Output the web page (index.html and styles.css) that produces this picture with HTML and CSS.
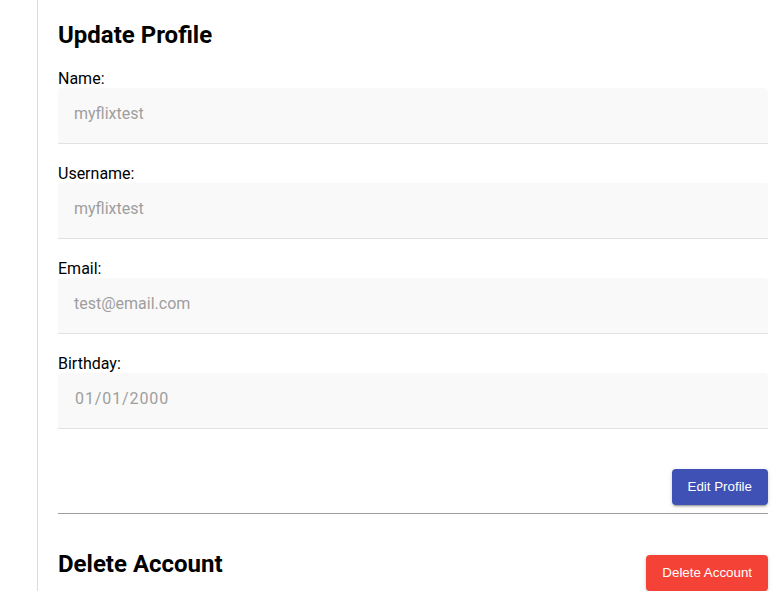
FILE: index.html
```html
<!DOCTYPE html>
<html lang="en">
<head>
<meta charset="utf-8">
<title>Profile</title>
<link rel="stylesheet" href="styles.css">
</head>
<body>
<div class="page">
  <main class="panel">
    <h2 class="title">Update Profile</h2>
    <form class="form">
      <div class="field">
        <label class="label">Name:</label>
        <div class="input">myflixtest</div>
      </div>
      <div class="field">
        <label class="label">Username:</label>
        <div class="input">myflixtest</div>
      </div>
      <div class="field">
        <label class="label">Email:</label>
        <div class="input">test@email.com</div>
      </div>
      <div class="field">
        <label class="label">Birthday:</label>
        <div class="input date">01/01/2000</div>
      </div>
      <div class="actions">
        <button type="button" class="btn btn-primary">Edit Profile</button>
      </div>
    </form>
    <hr class="divider">
    <div class="danger">
      <h2 class="title danger-title">Delete Account</h2>
      <button type="button" class="btn btn-danger">Delete Account</button>
    </div>
  </main>
</div>
</body>
</html>
```
FILE: styles.css
```css
html, body {
  margin: 0;
  padding: 0;
  background: #fff;
}
body {
  font-family: Roboto, "Liberation Sans", Arial, sans-serif;
  color: #000;
}
.page {
  padding-left: 37px;
  padding-right: 16px;
}
.panel {
  border-left: 1px solid #dcdcdc;
  padding-left: 20px;
  display: flex;
  flex-direction: column;
}
.title {
  margin: 21px 0 0;
  font-size: 24px;
  line-height: 28px;
  font-weight: 700;
}
.form {
  display: flex;
  flex-direction: column;
  gap: 20px;
  margin-top: 20px;
}
.field {
  display: flex;
  flex-direction: column;
}
.label {
  font-size: 16px;
  line-height: 19px;
}
.input {
  height: 51px;
  padding: 0 16px 4px;
  display: flex;
  align-items: center;
  background: #f9f9f9;
  border-bottom: 1px solid #e2e2e2;
  border-radius: 4px 4px 0 0;
  font-size: 16px;
  color: #9e9e9e;
}
.date {
  padding-left: 17px;
  letter-spacing: 0.9px;
}
.actions {
  display: flex;
  justify-content: flex-end;
  margin-top: 20px;
}
.btn {
  font-family: "Liberation Sans", Arial, sans-serif;
  font-size: 13.333px;
  line-height: 20px;
  height: 36px;
  padding: 0 16px;
  border: 0;
  border-radius: 4px;
  color: #fff;
  box-shadow: 0 3px 1px -2px rgba(0,0,0,0.2), 0 2px 2px 0 rgba(0,0,0,0.14), 0 1px 5px 0 rgba(0,0,0,0.12);
}
.btn-primary {
  background: #3f51b5;
}
.btn-danger {
  background: #f44336;
}
.divider {
  margin: 8px 0 0;
  border: 0;
  border-top: 1px solid #9e9e9e;
  height: 0;
}
.danger {
  display: flex;
  justify-content: space-between;
  align-items: flex-start;
}
.danger-title {
  margin-top: 36px;
}
.btn-danger {
  margin-top: 41px;
}
```
